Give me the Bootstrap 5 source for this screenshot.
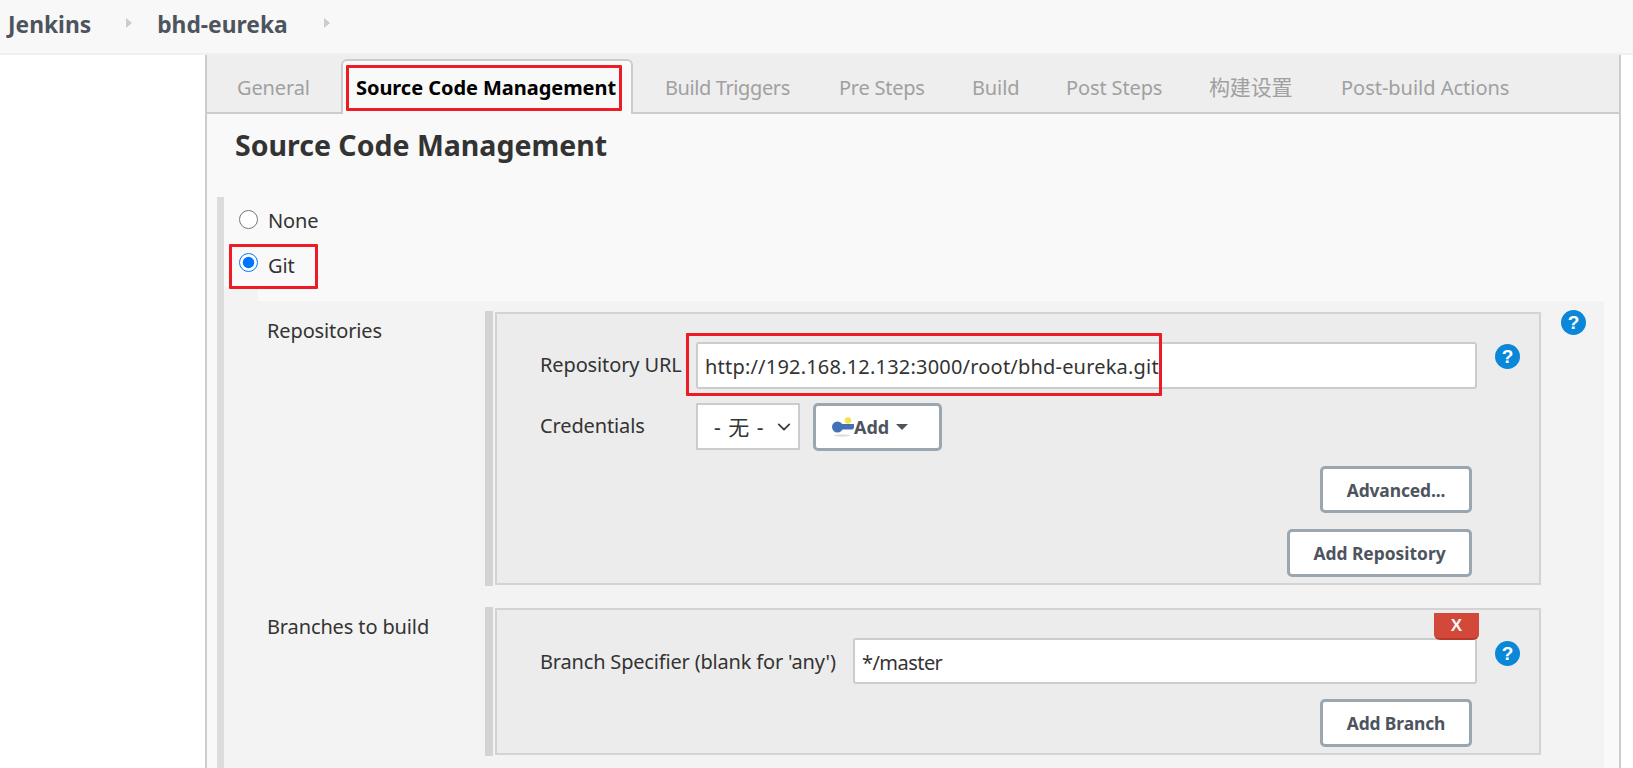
<!DOCTYPE html>
<html lang="en">
<head>
<meta charset="utf-8">
<title>bhd-eureka Config</title>
<link rel="stylesheet" href="https://cdn.jsdelivr.net/npm/bootstrap@5.3.0/dist/css/bootstrap.min.css">
<style>
html,body{height:768px;overflow:hidden;background:#fff}
body{font-family:"Noto Sans","Noto Sans CJK SC",sans-serif;font-size:20px;color:#333;line-height:24px;letter-spacing:-.13px}
.top-bar{height:55px;background:#f8f8f8;border-bottom:2px solid #eef0f2;padding-left:8px}
.crumb{font-size:22.8px;font-weight:700;color:#4d545d;letter-spacing:0;line-height:46px;height:50px}
.crumb-sep{width:0;height:0;border-left:6px solid #ccc;border-top:5px solid transparent;border-bottom:5px solid transparent;margin-top:-8px}
.panel-main{margin-left:205px;width:1416px;height:713px;background:#f9f9f9;border-left:2px solid #ccc;border-right:2px solid #ccc}
.tab-strip{height:59px;background:#eee;border-bottom:2px solid #ccc;padding-left:6px}
.tab-item{flex:none;color:#a0a0a0;padding:0 0 0 24px;height:46px;line-height:43px;white-space:nowrap}
.tab-general{width:128px}
.tab-triggers{width:174px;letter-spacing:-.4px}
.tab-pre{width:133px;letter-spacing:-.25px}
.tab-build{width:94px}
.tab-post{width:143px}
.tab-cjk{width:132px;font-size:21px}
.tab-last{letter-spacing:-.02px}
.tab-active{color:#000;font-weight:700;background:#f9f9f9;border:2px solid #ccc;border-bottom:0;border-radius:6px 6px 0 0;height:55px;line-height:53px;width:292px;padding:0 0 0 13px;margin:0 8px -2px 0;letter-spacing:-.05px}
.mark-box{position:absolute;border:3px solid #ed1c24;border-radius:1px;pointer-events:none}
.mark-tab{left:3px;top:4px;width:276px;height:46px}
.mark-git{left:5px;top:3px;width:89px;height:45px}
.mark-url{left:-10px;top:-9px;width:476px;height:63px}
.page-title{font-size:28.5px;font-weight:700;line-height:36px;color:#333;margin:13px 0 34px 28px;letter-spacing:0}
.scm-block{margin-left:10px;margin-right:15px;border-left:7px solid #dcdcdc;height:571px;overflow:hidden}
.scm-row{height:44px;padding-left:15px}
.scm-row input{width:19px;height:19px;margin:0;accent-color:#0075ff}
.git-row{height:60px;align-items:flex-start!important;padding-top:12px;background:linear-gradient(#f3f3f3,#f3f3f3) left bottom/34px 14px no-repeat}
.scm-label{margin-left:10px}
.label-none{padding-top:4px}
.label-git{margin-top:1px}
.git-body{background:#f3f3f3;padding:10px 0 0 0;height:467px}
.field-row{margin-bottom:21px}
.field-name{width:261px;padding:8px 0 0 43px}
.side-bar{border-left:8px solid #d3d3d3;padding-left:2px;width:1056px}
.field-box{border:2px solid #d3d3d3;background:#ececec;margin:1px 0;padding:28px 0 6px 43px}
.entry-row{margin-bottom:14px}
.entry-row-b{margin-bottom:15px}
.entry-name{flex:none;width:156px;padding-top:11px}
.entry-name-long{width:313px;padding-top:12px;letter-spacing:-.18px}
.text-entry{height:47px;border:2px solid #ccc;border-radius:3px;background:#fff;padding:2px 7px 0 7px;font-size:20px;color:#333;letter-spacing:.2px;outline:0;display:block;width:100%}
.text-short{height:46px;letter-spacing:-.55px}
.form-select.pick-entry{width:104px;height:47px;border:2px solid #ccc;border-radius:0;background-color:#fff;background-position:right 5px center;background-size:18px 14px;padding:0 0 0 16px;font-size:21px;word-spacing:2px;color:#333;font-family:inherit;line-height:24px}
.entry-wrap{width:781px}
.entry-wrap-b{width:624px}
.btn.jk-btn{background:#fff;border:3px solid #9aa7b0;border-radius:5px;color:#4d545d;font-weight:700;font-size:17.4px;line-height:20px;height:48px;padding:0;letter-spacing:0;--bs-btn-hover-bg:#fff}
.btn-adv{width:152px}
.btn.btn-adv{height:47px;letter-spacing:-.1px}
.btn.btn-branch{height:48px}
.btn-repo{width:185px}
.btn.btn-add{width:129px;margin-left:13px;padding-left:15px;justify-content:flex-start}
.add-text{margin-left:-1px;font-size:18px}
.caret-down{width:0;height:0;border-top:6px solid #4d545d;border-left:6px solid transparent;border-right:6px solid transparent;margin-left:7px}
.btn-stack{padding-right:67px;gap:16px}
.help-dot{flex:none;width:25px;height:25px;border-radius:50%;background:#0b87d9;color:#fff;font-size:19px;font-weight:700;line-height:25px;text-align:center;letter-spacing:0;font-family:"Liberation Sans",sans-serif}
.help-in{margin:2px 0 0 18px}
.help-low{margin-top:3px}
.help-out{margin:-1px 0 0 20px}
.del-chip{position:absolute;right:-2px;top:-25px;width:45px;height:27px;background:#d24939;border:0;border-bottom:2px solid #b93a2c;border-radius:0 0 6px 6px;color:#f5f5f5;font-weight:700;font-size:17px;line-height:26px;padding:0;z-index:2;font-family:"Liberation Sans",sans-serif}
</style>
</head>
<body>
<header class="top-bar d-flex align-items-center">
  <span class="crumb">Jenkins</span>
  <span class="crumb-sep" style="margin-left:35px"></span>
  <span class="crumb" style="margin-left:25px">bhd-eureka</span>
  <span class="crumb-sep" style="margin-left:36px"></span>
</header>
<main class="panel-main">
  <nav class="tab-strip d-flex align-items-end">
    <span class="tab-item tab-general">General</span>
    <span class="tab-item tab-active position-relative">Source Code Management<span class="mark-box mark-tab"></span></span>
    <span class="tab-item tab-triggers">Build Triggers</span>
    <span class="tab-item tab-pre">Pre Steps</span>
    <span class="tab-item tab-build">Build</span>
    <span class="tab-item tab-post">Post Steps</span>
    <span class="tab-item tab-cjk">构建设置</span>
    <span class="tab-item tab-last">Post-build Actions</span>
  </nav>
  <h1 class="page-title">Source Code Management</h1>
  <section class="scm-block">
    <div class="scm-row d-flex align-items-center">
      <input type="radio" name="scm" id="scm-none">
      <label class="scm-label label-none" for="scm-none">None</label>
    </div>
    <div class="scm-row git-row d-flex position-relative">
      <input type="radio" name="scm" id="scm-git" checked>
      <label class="scm-label label-git" for="scm-git">Git</label>
      <span class="mark-box mark-git"></span>
    </div>
    <div class="git-body">
      <div class="field-row d-flex align-items-start">
        <div class="field-name">Repositories</div>
        <div class="side-bar">
          <div class="field-box">
            <div class="entry-row d-flex align-items-start">
              <label class="entry-name">Repository URL</label>
              <div class="entry-wrap position-relative">
                <input class="text-entry" type="text" value="http://192.168.12.132:3000/root/bhd-eureka.git">
                <span class="mark-box mark-url"></span>
              </div>
              <span class="help-dot help-in">?</span>
            </div>
            <div class="entry-row-b d-flex align-items-start">
              <label class="entry-name">Credentials</label>
              <select class="form-select pick-entry"><option>- 无 -</option></select>
              <button type="button" class="btn jk-btn btn-add d-flex align-items-center">
                <svg width="24" height="24" viewBox="0 0 24 24" aria-hidden="true"><ellipse cx="11" cy="20.5" rx="8" ry="1.2" fill="#ddd"/><circle cx="6.5" cy="12" r="5.5" fill="#4272b4"/><path d="M7 9h16v4l-1.500 1.500H7z" fill="#4272b4"/><circle cx="17" cy="5.500" r="3.200" fill="#f5e34a"/></svg>
                <span class="add-text">Add</span><span class="caret-down"></span>
              </button>
            </div>
            <div class="btn-stack d-flex flex-column align-items-end">
              <button type="button" class="btn jk-btn btn-adv">Advanced...</button>
              <button type="button" class="btn jk-btn btn-repo">Add Repository</button>
            </div>
          </div>
        </div>
        <span class="help-dot help-out">?</span>
      </div>
      <div class="field-row d-flex align-items-start">
        <div class="field-name">Branches to build</div>
        <div class="side-bar">
          <div class="field-box">
            <div class="entry-row-b d-flex align-items-start">
              <label class="entry-name entry-name-long">Branch Specifier (blank for 'any')</label>
              <div class="entry-wrap-b position-relative">
                <button type="button" class="del-chip">X</button>
                <input class="text-entry text-short" type="text" value="*/master">
              </div>
              <span class="help-dot help-in help-low">?</span>
            </div>
            <div class="btn-stack d-flex flex-column align-items-end">
              <button type="button" class="btn jk-btn btn-adv btn-branch">Add Branch</button>
            </div>
          </div>
        </div>
      </div>
    </div>
  </section>
</main>
</body>
</html>
